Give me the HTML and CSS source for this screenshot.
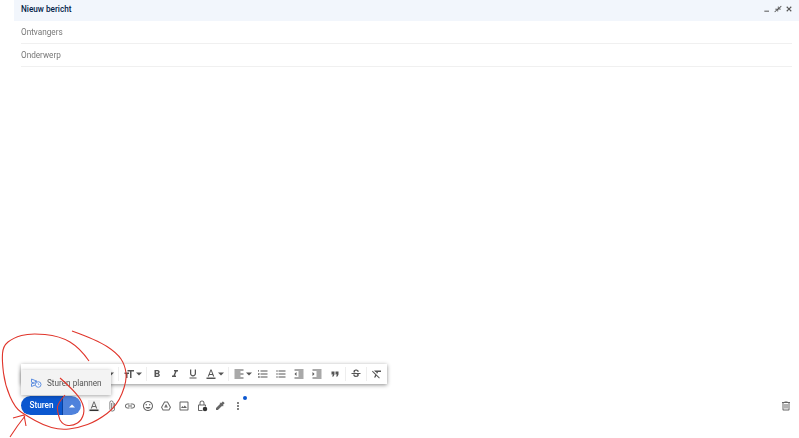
FILE: index.html
```html
<!DOCTYPE html>
<html lang="en">
<head>
  <meta charset="UTF-8" />
  <title>Nieuw bericht</title>
  <link rel="stylesheet" href="styles.css">
</head>
<body>
  <div class="compose">
    <header class="compose-head">
      <div class="head-title">Nieuw bericht</div>
      <div class="head-actions">
        <svg class="head-icon" viewBox="0 0 24 24"><path d="M4 17h14v3H4z"/></svg>
        <svg class="head-icon" viewBox="0 0 24 24"><path d="M21 2l-7 7V4.500h-2.500V13.500H20.500V11H16l7-7zM3 22l7-7v4.500h2.500V11H3.500v2.500H8l-7 7z"/></svg>
        <svg class="head-icon" viewBox="0 0 24 24"><path d="M20 6.400L17.600 4 12 9.600 6.400 4 4 6.400 9.600 12 4 17.600 6.400 20 12 14.400 17.600 20 20 17.600 14.400 12z"/></svg>
      </div>
    </header>
    <div class="field">Ontvangers</div>
    <div class="field">Onderwerp</div>

    <div class="format-bar">
      <span class="tool-small"></span>
      <svg class="caret" viewBox="0 0 8 8"><path d="M0 2h8L4 6z"/></svg>
      <span class="divider"></span>
      <svg class="tool-icon" viewBox="0 0 24 24"><path d="M9 4v3h5v13h3V7h5V4zM3 12h3v8h3v-8h3V9H3z"/></svg>
      <svg class="caret" viewBox="0 0 8 8"><path d="M0 2h8L4 6z"/></svg>
      <span class="divider"></span>
      <svg class="tool-icon" viewBox="0 0 24 24"><path d="M15.600 10.800c1-.7 1.700-1.800 1.700-2.800 0-2.300-1.800-4-4-4H7v14h7c2.100 0 3.700-1.700 3.700-3.800 0-1.500-.9-2.800-2.100-3.400zM10 6.500h3c.8 0 1.500.7 1.500 1.500s-.7 1.500-1.500 1.500h-3zm3.500 9H10v-3h3.500c.8 0 1.500.7 1.500 1.500s-.7 1.500-1.500 1.500z"/></svg>
      <svg class="tool-icon" viewBox="0 0 24 24"><path d="M10 4v3h2.200l-3.400 8H6v3h8v-3h-2.200l3.400-8H18V4z"/></svg>
      <svg class="tool-icon" viewBox="0 0 24 24"><path d="M12 17c3.300 0 6-2.700 6-6V3h-2.500v8c0 1.900-1.600 3.500-3.500 3.500S8.500 12.900 8.500 11V3H6v8c0 3.300 2.700 6 6 6zM5 19v2h14v-2z"/></svg>
      <svg class="tool-icon" viewBox="0 0 24 24"><path d="M11 3L5.500 17h2.300l1.100-3h6.200l1.100 3h2.300L13 3zm-1.400 9L12 5.700 14.400 12zM3 19h18v3H3z"/></svg>
      <svg class="caret" viewBox="0 0 8 8"><path d="M0 2h8L4 6z"/></svg>
      <span class="divider"></span>
      <svg class="tool-icon" viewBox="0 0 24 24"><path d="M3 3h18v2H3zM3 7h12v2H3zM3 11h18v2H3zM3 15h12v2H3zM3 19h18v2H3z"/></svg>
      <svg class="caret" viewBox="0 0 8 8"><path d="M0 2h8L4 6z"/></svg>
      <svg class="tool-icon" viewBox="0 0 24 24"><path d="M2 17h2v.5H3v1h1v.5H2v1h3v-4H2zm1-9h1V4H2v1h1zm-1 3h1.800L2 13.100v.9h3v-1H3.200L5 10.900V10H2zm5-6v2h14V5zm0 14h14v-2H7zm0-6h14v-2H7z"/></svg>
      <svg class="tool-icon" viewBox="0 0 24 24"><path d="M4 10.500c-.8 0-1.500.7-1.500 1.500s.7 1.500 1.500 1.500 1.500-.7 1.500-1.500-.7-1.500-1.500-1.500zm0-6c-.8 0-1.500.7-1.500 1.500S3.200 7.500 4 7.500 5.500 6.800 5.500 6 4.800 4.500 4 4.500zm0 12c-.8 0-1.500.7-1.500 1.500s.7 1.500 1.500 1.500 1.500-.7 1.500-1.500-.7-1.500-1.500-1.500zM7 19h14v-2H7zm0-6h14v-2H7zm0-8v2h14V5z"/></svg>
      <svg class="tool-icon" viewBox="0 0 24 24"><path d="M11 17h10v-2H11zm-8-5l4 4V8zm0 9h18v-2H3zM3 3v2h18V3zm8 6h10V7H11zm0 4h10v-2H11z"/></svg>
      <svg class="tool-icon" viewBox="0 0 24 24"><path d="M3 21h18v-2H3zM3 8v8l4-4zm8 9h10v-2H11zM3 3v2h18V3zm8 6h10V7H11zm0 4h10v-2H11z"/></svg>
      <svg class="tool-icon" viewBox="0 0 24 24"><path d="M6 17h3l2-4V7H5v6h3zm8 0h3l2-4V7h-6v6h3z"/></svg>
      <span class="divider tight"></span>
      <svg class="tool-icon" viewBox="0 0 24 24"><path d="M7.240 8.750c-.26-.48-.39-1.030-.39-1.670 0-.61.13-1.160.4-1.670.26-.5.63-.93 1.110-1.290.48-.35 1.050-.63 1.700-.83.66-.19 1.390-.29 2.180-.29.81 0 1.540.11 2.210.34.66.22 1.230.54 1.690.94.47.4.83.88 1.080 1.430.25.55.38 1.150.38 1.810h-3.010c0-.31-.05-.59-.15-.85-.09-.27-.24-.49-.44-.68-.2-.19-.45-.33-.75-.44-.3-.1-.66-.16-1.060-.16-.39 0-.74.04-1.030.13-.29.09-.53.21-.72.36-.19.16-.34.34-.44.55-.1.21-.15.43-.15.66 0 .48.25.88.74 1.210.38.25.77.48 1.410.7H7.390c-.05-.08-.11-.17-.15-.25zM21 12v-2H3v2h9.620c.18.07.4.14.55.2.37.17.66.34.87.51.21.17.35.36.43.57.07.2.11.43.11.69 0 .23-.05.45-.14.66-.09.2-.23.38-.42.53-.19.15-.42.26-.71.35-.29.08-.63.13-1.010.13-.43 0-.83-.04-1.180-.13s-.66-.23-.91-.42c-.25-.19-.45-.44-.59-.75-.14-.31-.25-.76-.25-1.210H6.400c0 .55.08 1.130.24 1.580.16.45.37.85.65 1.210.28.35.6.66.98.92.37.26.78.48 1.220.65.44.17.9.3 1.380.39.48.08.96.13 1.440.13.8 0 1.530-.09 2.180-.28s1.210-.45 1.670-.79c.46-.34.82-.77 1.070-1.270s.38-1.070.38-1.710c0-.6-.1-1.140-.31-1.610-.05-.11-.11-.23-.17-.33H21z"/></svg>
      <span class="divider tight"></span>
      <svg class="tool-icon" viewBox="0 0 24 24"><path d="M3.300 5.700L2 7l6.500 6.500L6 19h3l1.600-3.400L16.300 21l1.300-1.300zM6 5v.2L8.800 8H11l-.7 1.500 2.100 2.100L14.200 8H20V5z"/></svg>

      <div class="send-later">
        <svg class="later-icon" viewBox="0 0 24 24"><path fill="none" stroke="#5f8fe0" stroke-width="2" d="M3 4l11 4.500-4 .5v5l4 .500L3 19v-5.500L8 12 3 10.500z"/><circle cx="16.500" cy="15" r="5.500" fill="#fff" stroke="#5f8fe0" stroke-width="2"/><path fill="none" stroke="#5f8fe0" stroke-width="1.500" d="M16.500 12v3.500h2.500"/></svg>
        <span>Sturen plannen</span>
      </div>
    </div>

    <footer class="compose-foot">
      <div class="send-btn">
        <span class="send-label">Sturen</span>
        <span class="send-more"><svg class="send-caret" viewBox="0 0 8 8"><path d="M0 6h8L4 2z"/></svg></span>
      </div>
      <svg class="foot-icon first" viewBox="0 0 24 24"><path d="M11 3L5.500 17h2.300l1.100-3h6.200l1.100 3h2.300L13 3zm-1.400 9L12 5.700 14.400 12z"/><path class="ink" d="M3 19h18v3H3z"/></svg>
      <svg class="foot-icon" viewBox="0 0 24 24"><path d="M16.500 6v11.500c0 2.200-1.800 4-4 4s-4-1.800-4-4V5c0-1.400 1.100-2.500 2.500-2.500s2.500 1.100 2.500 2.500v10.500c0 .6-.4 1-1 1s-1-.4-1-1V6H10v9.500c0 1.400 1.100 2.500 2.500 2.500s2.500-1.100 2.500-2.500V5c0-2.200-1.800-4-4-4S7 2.800 7 5v12.500c0 3 2.500 5.500 5.500 5.500s5.500-2.500 5.500-5.500V6z"/></svg>
      <svg class="foot-icon" viewBox="0 0 24 24"><path d="M3.900 12c0-1.700 1.400-3.100 3.100-3.100h4V7H7c-2.800 0-5 2.200-5 5s2.200 5 5 5h4v-1.900H7c-1.700 0-3.100-1.400-3.100-3.100zM8 13h8v-2H8zm9-6h-4v1.900h4c1.700 0 3.100 1.400 3.100 3.100s-1.400 3.100-3.100 3.100h-4V17h4c2.800 0 5-2.200 5-5s-2.200-5-5-5z"/></svg>
      <svg class="foot-icon" viewBox="0 0 24 24"><path d="M12 2C6.500 2 2 6.500 2 12s4.500 10 10 10 10-4.500 10-10S17.500 2 12 2zm0 18c-4.400 0-8-3.600-8-8s3.600-8 8-8 8 3.600 8 8-3.600 8-8 8zM8.500 11c.8 0 1.500-.7 1.500-1.500S9.300 8 8.500 8 7 8.700 7 9.500 7.700 11 8.500 11zm7 0c.8 0 1.500-.7 1.500-1.500S16.300 8 15.500 8 14 8.700 14 9.500s.7 1.500 1.500 1.500zM12 17.500c2.300 0 4.300-1.500 5.100-3.500H6.900c.8 2 2.800 3.500 5.100 3.500z"/></svg>
      <svg class="foot-icon" viewBox="0 0 24 24"><path d="M8.500 3h7L22 14.500 18.500 21h-13L2 14.500zm1.200 2L4.300 14.500 6.600 19h10.800l2.300-4.500L14.300 5zM12 8l3.800 7H8.200zm0 3.800L11.300 13h1.400z"/></svg>
      <svg class="foot-icon" viewBox="0 0 24 24"><path d="M19 3H5c-1.100 0-2 .9-2 2v14c0 1.100.9 2 2 2h14c1.100 0 2-.9 2-2V5c0-1.100-.9-2-2-2zm0 16H5V5h14zM13.500 11l-2.800 3.500-2-2.400L6 16h12z"/></svg>
      <svg class="foot-icon" viewBox="0 0 24 24"><path d="M7 9V6c0-2.800 2.200-5 5-5s5 2.200 5 5v3h1c1.100 0 2 .9 2 2v2h-2v-2H6v9h7v2H6c-1.100 0-2-.9-2-2v-9c0-1.100.9-2 2-2zm2 0h6V6c0-1.700-1.300-3-3-3S9 4.300 9 6z"/><circle class="ink" cx="18" cy="18" r="4.500"/></svg>
      <svg class="foot-icon" viewBox="0 0 24 24"><path d="M20.700 5.600l-2.300-2.300c-.4-.4-1-.4-1.400 0l-3 3-1.500-1.500-1.400 1.400 1.400 1.400L4 16.200V20h3.800l8.600-8.600 1.400 1.400 1.400-1.400-1.500-1.500 3-3c.4-.4.4-1 0-1.500z"/></svg>
      <div class="more-wrap">
        <svg class="foot-icon" viewBox="0 0 24 24"><path d="M12 8c1.100 0 2-.9 2-2s-.9-2-2-2-2 .9-2 2 .9 2 2 2zm0 2c-1.100 0-2 .9-2 2s.9 2 2 2 2-.9 2-2-.9-2-2-2zm0 6c-1.100 0-2 .9-2 2s.9 2 2 2 2-.9 2-2-.9-2-2-2z"/></svg>
        <span class="blue-dot"></span>
      </div>
      <svg class="foot-icon trash" viewBox="0 0 24 24"><path d="M15 4V3H9v1H4v2h1v13c0 1.100.9 2 2 2h10c1.100 0 2-.9 2-2V6h1V4zm2 15H7V6h10zM9 8h2v9H9zm4 0h2v9h-2z"/></svg>
    </footer>
  </div>

  <!-- pen annotation drawn over the screenshot -->
  <svg class="scribble" viewBox="0 0 799 438">
    <path d="M89 361Q80 348 70 342Q60 336 45 334.500Q30 333 21.500 335.500Q13 338 8 342Q3 346 2.500 353.500Q2 361 3.500 373Q5 385 10 396.500Q15 408 21 412Q27 416 35 420.500Q43 425 51.500 427.500Q60 430 69 429Q78 428 87.500 424.500Q97 421 107 413.500Q117 406 122 393.500Q127 381 126 373Q125 365 121 359Q117 353 107 346.500Q97 340 72 331"/>
    <path d="M60 378Q77 393 81 400.500Q85 408 83.500 414Q82 420 77.500 423Q73 426 68 425.500Q63 425 60 420Q57 411 57.500 407Q58 403 65 395"/>
    <path d="M10 437Q17 426 25 416M13 418L24 415L26 426"/>
  </svg>
</body>
</html>
```

FILE: styles.css
```css
* {
  box-sizing: border-box;
  margin: 0;
  padding: 0;
}

html, body {
  height: 100%;
}

body {
  font-family: Roboto, 'Liberation Sans', sans-serif;
  background: #fff;
  color: #444;
  overflow: hidden;
}

.compose {
  height: 100%;
  margin-left: 14px;
  display: flex;
  flex-direction: column;
  padding-bottom: 23px;
  filter: blur(0.35px);
}

.compose-head {
  height: 21px;
  background-color: #f2f6fc;
  padding: 0 7px 3px;
  display: flex;
  justify-content: space-between;
  align-items: center;
  flex-shrink: 0;
}

.head-title {
  font-size: 8.2px;
  font-weight: 500;
  color: #041e49;
}

.head-actions {
  display: flex;
  gap: 3px;
  margin-right: -1px;
}

.head-icon {
  width: 8px;
  height: 8px;
  fill: #555;
}

.field {
  height: 23px;
  margin: 0 7px;
  border-bottom: 1px solid #f0f0f0;
  font-size: 8.2px;
  line-height: 22px;
  color: #777;
  flex-shrink: 0;
}

.format-bar {
  position: relative;
  margin-top: auto;
  margin-left: 7px;
  margin-bottom: 12px;
  width: 366px;
  height: 20px;
  background: #fff;
  box-shadow: 0 1px 4px rgba(0,0,0,0.45);
  display: flex;
  align-items: center;
}

.tool-small {
  width: 89px;
  flex-shrink: 0;
}

.tool-icon {
  width: 12px;
  height: 12px;
  fill: #555;
  margin: 0 3px;
  flex-shrink: 0;
}

.caret {
  width: 6px;
  height: 6px;
  fill: #555;
  margin-right: 2px;
  margin-left: -2px;
  flex-shrink: 0;
}

.divider {
  width: 1px;
  height: 14px;
  background: #eee;
  margin: 0 1.5px;
  flex-shrink: 0;
}

.divider.tight {
  margin: 0 1px;
}

.send-later {
  position: absolute;
  left: 0;
  top: 6px;
  width: 90px;
  height: 25px;
  background: #f3f3f3;
  box-shadow: 0 1px 4px rgba(0,0,0,0.35);
  display: flex;
  align-items: center;
  gap: 5px;
  padding-left: 9px;
  font-size: 8.2px;
  color: #555;
}

.later-icon {
  width: 12px;
  height: 12px;
}

.compose-foot {
  height: 19px;
  padding: 0 7px;
  display: flex;
  align-items: center;
  flex-shrink: 0;
}

.send-btn {
  width: 60px;
  height: 19px;
  display: flex;
  font-size: 8.2px;
  font-weight: 500;
  color: #fff;
}

.send-label {
  width: 41px;
  background: #0b57d0;
  border-radius: 10px 0 0 10px;
  text-align: center;
  line-height: 19px;
}

.send-more {
  width: 19px;
  background: #4f82dc;
  border-radius: 0 10px 10px 0;
  display: flex;
  align-items: center;
  justify-content: center;
  border-left: 1px solid #0842a0;
}

.send-caret {
  width: 6px;
  height: 6px;
  fill: #fff;
}

.foot-icon {
  width: 12px;
  height: 12px;
  fill: #666;
  margin-right: 6px;
  flex-shrink: 0;
  display: block;
}

.foot-icon.first {
  margin-left: 7px;
  background: #f3f3f3;
}

.foot-icon .ink {
  fill: #333;
}

.foot-icon.trash {
  margin-left: auto;
  margin-right: 0;
}

.more-wrap {
  position: relative;
}

.blue-dot {
  position: absolute;
  right: 3px;
  top: -4px;
  width: 4px;
  height: 4px;
  border-radius: 50%;
  background: #0b57d0;
}

.scribble {
  position: absolute;
  left: 0;
  top: 0;
  width: 799px;
  height: 438px;
  pointer-events: none;
  filter: blur(0.25px);
}

.scribble path {
  fill: none;
  stroke: #e0352b;
  stroke-width: 1.1;
}
```
